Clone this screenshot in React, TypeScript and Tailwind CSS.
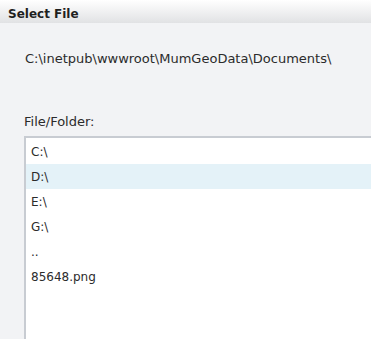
export default function App() {
  const items = ['C:\\', 'D:\\', 'E:\\', 'G:\\', '..', '85648.png'];
  const selected = 1;

  return (
    <div
      className="h-[339px] w-[371px] overflow-hidden bg-[#f2f3f5] text-[#2b2b2b]"
      style={{ fontFamily: '"DejaVu Sans", Verdana, sans-serif' }}
    >
      {/* Title bar */}
      <div className="h-[23px] bg-gradient-to-b from-[#ffffff] to-[#e1e2e4] pl-[8px] pt-[7px] text-[12px] leading-[15px] font-bold text-[#1f1f1f]">
        Select File
      </div>

      {/* Current path */}
      <div className="pl-[25px] pt-[28px] text-[13px] leading-[16px]">
        C:\inetpub\wwwroot\MumGeoData\Documents\
      </div>

      {/* File list */}
      <div className="pl-[24px] pt-[47px]">
        <div className="mb-[6px] text-[13px] leading-[16px]">File/Folder:</div>
        <div className="h-[220px] border-l-2 border-t-2 border-[#c8ccd2] bg-white pt-[1px]">
          {items.map((item, i) => (
            <div
              key={item}
              className={
                'flex h-[25px] items-center pl-[5px] text-[12px] ' +
                (i === selected ? 'bg-[#e4f2f8]' : '')
              }
            >
              {item}
            </div>
          ))}
        </div>
      </div>
    </div>
  );
}
